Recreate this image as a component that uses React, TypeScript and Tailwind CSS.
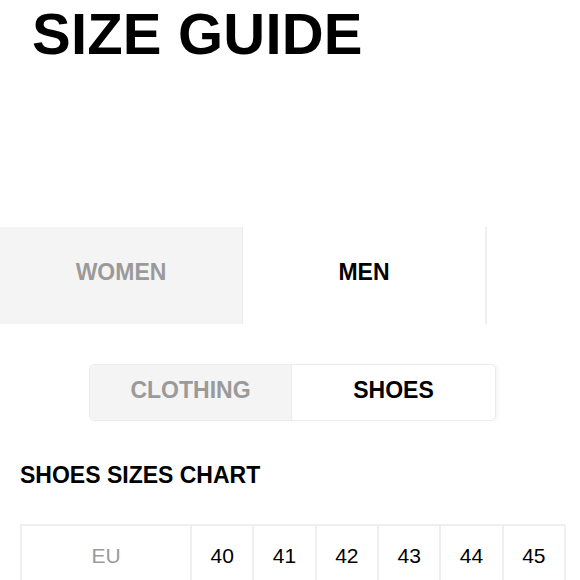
// Size guide page: gender tabs, category switch and shoe size chart

const font = { fontFamily: '"Liberation Sans", Arial, sans-serif' };

const euSizes = ['40', '41', '42', '43', '44', '45'];

export default function App() {
  return (
    <div className="w-[580px] h-[580px] overflow-hidden bg-white text-black" style={font}>
      {/* Title */}
      <h1 className="pl-[32px] text-[58px] leading-[68px] font-bold tracking-[0.2px]">
        SIZE GUIDE
      </h1>

      {/* Gender tabs */}
      <div className="mt-[159px] flex h-[97px]">
        <div className="w-[243px] pb-[6px] flex items-center justify-center bg-[#f4f4f4] border-r border-[#ebebeb] text-[23px] font-bold text-[#9a9a9a]">
          WOMEN
        </div>
        <div className="w-[244px] pb-[6px] flex items-center justify-center border-r-2 border-[#efefef] text-[23px] font-bold">
          MEN
        </div>
      </div>

      {/* Category switch */}
      <div className="mt-[40px] ml-[89px] w-[407px] h-[57px] flex rounded-[5px] border border-[#ebebeb] overflow-hidden shadow-[3px_0_3px_rgba(0,0,0,0.03)]">
        <div className="w-[202px] pb-[5px] flex items-center justify-center bg-[#f4f4f4] border-r border-[#ebebeb] text-[23px] font-bold text-[#9a9a9a]">
          CLOTHING
        </div>
        <div className="flex-1 pb-[5px] flex items-center justify-center text-[23px] font-bold">
          SHOES
        </div>
      </div>

      {/* Chart heading */}
      <h2 className="mt-[40px] pl-[20px] text-[23px] leading-[28px] font-bold">
        SHOES SIZES CHART
      </h2>

      {/* Size table */}
      <div className="mt-[35px] ml-[20px] w-[546px] flex border-t-2 border-l-2 border-r-2 border-[#efefef] h-[70px]">
        <div className="w-[168px] pt-[14px] text-center text-[21px] text-[#9a9a9a]">EU</div>
        {euSizes.map((size) => (
          <div
            key={size}
            className="flex-1 pt-[14px] text-center text-[21px] border-l-2 border-[#efefef]"
          >
            {size}
          </div>
        ))}
      </div>
    </div>
  );
}
